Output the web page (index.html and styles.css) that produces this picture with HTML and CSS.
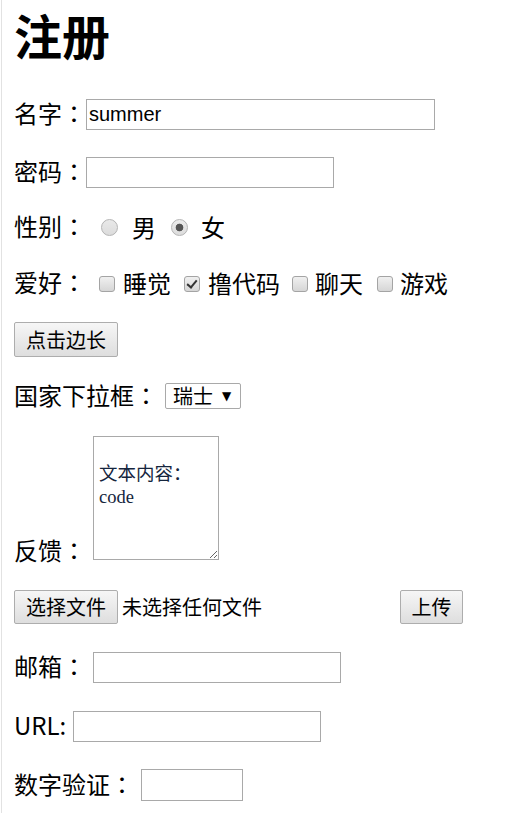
FILE: index.html
```html
<!DOCTYPE html>
<html lang="zh-CN">
<head>
<meta charset="utf-8">
<title>注册</title>
<link rel="stylesheet" href="styles.css">
</head>
<body>
<form class="page">
  <h1 class="title">注册</h1>

  <div class="row r-name">
    <label class="label">名字<span class="colon" lang="zh-Hant">：</span></label>
    <input class="field field-wide" type="text" value="summer">
  </div>

  <div class="row r-pass">
    <label class="label">密码<span class="colon" lang="zh-Hant">：</span></label>
    <input class="field" type="password">
  </div>

  <div class="row r-sex">
    <span class="label">性别<span class="colon" lang="zh-Hant">：</span></span>
    <span class="radio radio-first"></span><span class="opt opt-m">男</span>
    <span class="radio radio-on"></span><span class="opt opt-f">女</span>
  </div>

  <div class="row r-hobby">
    <span class="label">爱好<span class="colon" lang="zh-Hant">：</span></span>
    <span class="check c1"></span><span class="opt o1">睡觉</span>
    <span class="check check-on c2"></span><span class="opt o2">撸代码</span>
    <span class="check c3"></span><span class="opt o3">聊天</span>
    <span class="check c4"></span><span class="opt o4">游戏</span>
  </div>

  <div class="row r-btn">
    <button class="btn btn-long" type="button">点击边长</button>
  </div>

  <div class="row r-country">
    <span class="label">国家下拉框<span class="colon" lang="zh-Hant">：</span></span>
    <span class="select"><span class="select-text">瑞士</span><span class="select-arrow">▼</span></span>
  </div>

  <div class="row row-area r-area">
    <span class="label label-bottom">反馈<span class="colon" lang="zh-Hant">：</span></span>
    <textarea class="area">

文本内容：
code</textarea>
  </div>

  <div class="row r-file">
    <button class="btn btn-long" type="button">选择文件</button>
    <span class="file-note">未选择任何文件</span>
    <button class="btn btn-upload" type="button">上传</button>
  </div>

  <div class="row r-mail">
    <label class="label">邮箱<span class="colon" lang="zh-Hant">：</span></label>
    <input class="field field-gap" type="text">
  </div>

  <div class="row r-url">
    <label class="label">URL:</label>
    <input class="field field-gap" type="text">
  </div>

  <div class="row r-num">
    <label class="label">数字验证<span class="colon" lang="zh-Hant">：</span></label>
    <input class="field field-num field-gap" type="text">
  </div>
</form>
</body>
</html>
```

FILE: styles.css
```css
html, body {
  margin: 0;
  padding: 0;
  background: #fff;
}

body {
  margin-left: 1px;
  border-left: 1px solid #e2e2e2;
  min-height: 813px;
  box-sizing: border-box;
  font-family: "Noto Sans CJK SC", "Liberation Sans", sans-serif;
  color: #000;
}

.page {
  padding: 0 0 0 12px;
  display: flex;
  flex-direction: column;
}

.title {
  margin: 0;
  font-size: 48px;
  line-height: 68px;
  font-weight: 700;
}

.row {
  display: flex;
  align-items: center;
  height: 36px;
  font-size: 24px;
}

.r-name { margin-top: 28px; }
.r-pass { margin-top: 22px; }
.r-sex { margin-top: 19.5px; }
.r-hobby { margin-top: 20px; }
.r-btn { margin-top: 20px; }
.r-country { margin-top: 20.5px; }
.r-area { margin-top: 22px; }
.r-file { margin-top: 19px; }
.r-mail { margin-top: 24.5px; }
.r-url { margin-top: 22.5px; }
.r-num { margin-top: 23px; }

.label {
  white-space: nowrap;
  line-height: 34px;
  padding-bottom: 3px;
}

.colon {
  font-family: "Noto Sans CJK TC", "Noto Sans CJK SC", sans-serif;
}

.field {
  box-sizing: border-box;
  width: 248px;
  height: 31px;
  margin: 0;
  padding: 0 2px;
  border: 1px solid #a9a9a9;
  font-family: "Liberation Sans", sans-serif;
  font-size: 20px;
  color: #000;
  background: #fff;
}

.field-wide { width: 349px; }
.field-gap { margin-left: 7px; }
.field-num { width: 102px; height: 32px; }

.radio {
  box-sizing: border-box;
  width: 17px;
  height: 17px;
  border-radius: 50%;
  border: 1px solid #b4b4b4;
  background: linear-gradient(#e9e9e9, #dcdcdc);
  flex: none;
}
.radio-first { margin-left: 15px; }
.radio-on {
  margin-left: 15px;
  background: radial-gradient(circle, #555 0 3.5px, transparent 4.2px), linear-gradient(#ececec, #dcdcdc);
}
.opt-m { margin-left: 14px; }
.opt-f { margin-left: 13px; }

.check {
  box-sizing: border-box;
  width: 16px;
  height: 16px;
  border-radius: 3px;
  border: 1px solid #a4a4a4;
  background: linear-gradient(#f0f0f0, #d6d6d6);
  flex: none;
  position: relative;
}
.check-on::after {
  content: "";
  position: absolute;
  left: 4px;
  top: 1px;
  width: 4px;
  height: 8px;
  border: solid #333;
  border-width: 0 2.5px 2.5px 0;
  transform: rotate(40deg);
}
.c1 { margin-left: 13px; }
.o1 { margin-left: 8px; }
.c2 { margin-left: 13px; }
.o2 { margin-left: 8px; }
.c3 { margin-left: 12px; }
.o3 { margin-left: 7px; }
.c4 { margin-left: 14px; }
.o4 { margin-left: 7px; }

.opt {
  line-height: 34px;
  padding-bottom: 2px;
}

.btn {
  box-sizing: border-box;
  height: 35px;
  margin: 0;
  padding: 0;
  border: 1px solid #adadad;
  border-radius: 2px;
  background: linear-gradient(#f6f6f6, #dedede);
  font-family: "Noto Sans CJK SC", sans-serif;
  font-size: 20px;
  line-height: 1;
  color: #000;
}
.btn-long { width: 104px; }
.r-file .btn { height: 34px; }
.btn-upload {
  width: 63px;
  margin-left: 138px;
}

.select {
  box-sizing: border-box;
  display: flex;
  align-items: center;
  width: 76px;
  height: 26px;
  margin-left: 7px;
  border: 1px solid #a9a9a9;
  border-radius: 2px;
  background: #fff;
}
.select-text {
  font-size: 20px;
  line-height: 24px;
  margin-left: 7px;
}
.select-arrow {
  font-family: "DejaVu Sans", sans-serif;
  font-size: 12px;
  margin-left: 9px;
}

.row-area {
  height: 134px;
  align-items: flex-end;
}
.label-bottom { align-self: flex-end; }
.area {
  align-self: flex-start;
  box-sizing: border-box;
  width: 126px;
  height: 124px;
  margin: 0 0 0 7px;
  padding: 3px 5px;
  border: 1px solid #a9a9a9;
  font-family: "Liberation Serif", "Noto Sans CJK SC", serif;
  font-size: 18.5px;
  line-height: 23px;
  color: #15253d;
  resize: both;
  overflow: hidden;
}

.file-note {
  margin-left: 4px;
  font-size: 20px;
  line-height: 34px;
}
```
